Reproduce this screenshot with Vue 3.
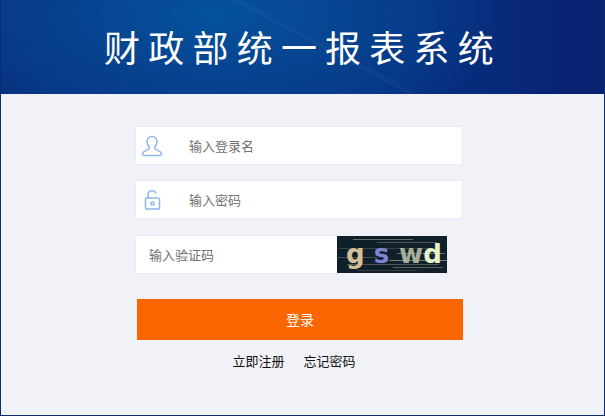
<script setup>
const noise = [
  [16, 3, 60, '#6d6d66'], [40, 6, 60, '#55554f'], [2, 12, 100, '#39443f'], [60, 17, 48, '#6f6f68'],
  [0, 21, 40, '#4a4e4e'], [52, 24, 58, '#7b7f72'], [10, 28, 92, '#4f5452'], [56, 31, 50, '#5d6158'], [20, 34, 60, '#394040']
]
</script>

<template>
  <div class="page">
    <header class="banner">
      <div class="sheen"></div>
      <h1 class="title">财政部统一报表系统</h1>
    </header>
    <main class="content">
      <div class="form">
        <label class="field">
          <span class="icon">
            <svg width="22" height="22" viewBox="0 0 22 22" fill="none" stroke="#8fb5ea" stroke-width="1.500">
              <path d="M11 1.500c-3 0-5 2.300-5 5.200 0 2 .9 3.800 2.300 5v1.300c0 1-1 1.500-2.600 2.100C3.300 16 1.500 16.800 1.500 18.600c0 1.200.9 2 2.200 2h14.600c1.300 0 2.200-.8 2.200-2 0-1.800-1.800-2.600-4.200-3.500-1.600-.6-2.600-1.100-2.600-2.100v-1.300c1.400-1.200 2.300-3 2.300-5C16 3.800 14 1.500 11 1.500z"/>
            </svg>
          </span>
          <span class="ph">输入登录名</span>
        </label>
        <label class="field second">
          <span class="icon">
            <svg width="22" height="22" viewBox="0 0 22 22" fill="none" stroke="#8fb5ea" stroke-width="1.500">
              <rect x="4.500" y="9" width="14" height="11" rx="1.800"/>
              <circle cx="11.500" cy="14.500" r="1.600"/>
              <path d="M7 9V5.500C7 3.300 8.800 1.700 11 1.700c1.900 0 3.400 1.100 4 2.800"/>
            </svg>
          </span>
          <span class="ph">输入密码</span>
        </label>
        <div class="captcha-row">
          <label class="field code"><span class="ph">输入验证码</span></label>
          <div class="captcha">
            <i v-for="(n, i) in noise" :key="i" class="line" :style="{ left: n[0] + 'px', top: n[1] + 'px', width: n[2] + 'px', background: n[3] }"></i>
            <span class="c1">g</span><span class="c2">s</span><span class="c3">w</span><span class="c4">d</span>
          </div>
        </div>
        <button class="submit" type="button">登录</button>
        <div class="links"><a>立即注册</a><a>忘记密码</a></div>
      </div>
    </main>
  </div>
</template>

<style>
html, body { margin: 0; padding: 0; background: #f0f2f7; }
</style>

<style scoped>
.page {
  width: 605px;
  height: 416px;
  box-sizing: border-box;
  border: 1px solid #0c2a70;
  border-top: 0;
  background: #f0f2f7;
  display: flex;
  flex-direction: column;
  font-family: "Noto Sans CJK SC", "Liberation Sans", sans-serif;
  overflow: hidden;
}
.banner {
  position: relative;
  height: 94px;
  margin: 0 -1px;
  flex: none;
  background: radial-gradient(ellipse 300px 130px at 215px 15px, #05529c 0%, #074390 45%, transparent 100%),
    linear-gradient(90deg, #07307f 0%, #063b88 40%, #062f80 70%, #0a2070 100%);
  display: flex;
  align-items: center;
  justify-content: center;
  overflow: hidden;
}
.sheen {
  position: absolute;
  inset: 0;
  background: linear-gradient(28deg, transparent 52%, rgba(120, 170, 230, .07) 52.500%, transparent 54%);
}
.title {
  position: relative;
  margin: -2px 0 0 1px;
  color: #fff;
  font-size: 36px;
  line-height: 50px;
  font-weight: 400;
  letter-spacing: 8.200px;
  white-space: nowrap;
}
.content { padding-top: 32px; padding-left: 134px; }
.form { width: 328px; }
.field {
  display: flex;
  align-items: center;
  box-sizing: border-box;
  width: 328px;
  height: 39px;
  background: #fff;
  border: 1px solid #e6ecf5;
  font-size: 13px;
  color: #707070;
}
.second { margin-top: 15px; }
.icon { width: 53px; padding-left: 5px; box-sizing: border-box; display: flex; flex: none; }
.captcha-row { display: flex; margin-top: 16px; align-items: flex-start; }
.code { width: 202px; padding-left: 13px; border-right: 0; }
.captcha {
  position: relative;
  width: 110px;
  height: 37px;
  margin-top: 1px;
  background: #10202b;
  display: flex;
  align-items: center;
  justify-content: flex-start;
  padding-left: 9px;
  box-sizing: border-box;
  gap: 9px;
  overflow: hidden;
  font-family: "DejaVu Sans", sans-serif;
  font-size: 26px;
  font-weight: 700;
  line-height: 1;
}
.line { position: absolute; height: 1px; }
.captcha span { position: relative; margin-top: -1px; }
.c1 { color: #d8bf97; }
.c2 { color: #7f83d6; }
.c3 { color: #a8ae9a; margin-left: 1px; }
.c4 { color: #e8f2cc; margin-left: -9px; }
.submit {
  display: block;
  width: 326px;
  height: 41px;
  margin: 25px 0 0 2px;
  padding: 0 0 2px;
  border: 0;
  background: #fc6600;
  color: #fff;
  font: inherit;
  font-size: 14px;
}
.links {
  display: flex;
  justify-content: center;
  gap: 19px;
  margin-top: 11px;
  padding-right: 10px;
  font-size: 13px;
  line-height: 20px;
  color: #111;
}
</style>
